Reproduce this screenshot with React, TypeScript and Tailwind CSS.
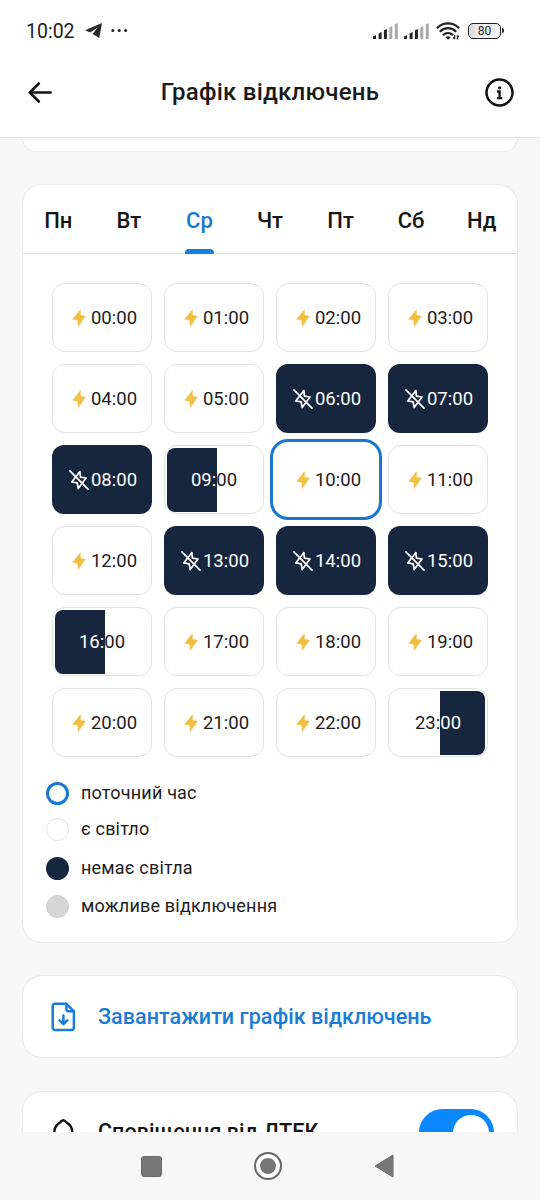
import React from 'react'

type SlotState = 'on' | 'off' | 'offFirst' | 'offSecond'

const days = ['Пн', 'Вт', 'Ср', 'Чт', 'Пт', 'Сб', 'Нд']
const activeDay = 2
const currentHour = 10

const outages: Record<number, SlotState> = {
  6: 'off',
  7: 'off',
  8: 'off',
  9: 'offFirst',
  13: 'off',
  14: 'off',
  15: 'off',
  16: 'offFirst',
  23: 'offSecond',
}

function BoltIcon() {
  return (
    <svg width="20" height="20" viewBox="0 0 20 20" className="shrink-0">
      <path
        d="M11.4 1.8 3.7 11.3 8.7 12.3 9.4 18.3 16.4 8.2 11.4 7.2Z"
        fill="#efc044"
        stroke="#efc044"
        strokeWidth="0.5"
        strokeLinejoin="round"
      />
    </svg>
  )
}

function BoltOffIcon() {
  return (
    <svg
      width="20"
      height="20"
      viewBox="0 0 20 20"
      fill="none"
      stroke="#fff"
      strokeWidth="1.7"
      strokeLinecap="round"
      strokeLinejoin="round"
      className="shrink-0"
    >
      <path d="M10.9 1.6 2.8 12 8.2 12.8 9.2 18.6 17 8 11.4 7.2Z" />
      <path d="M0.9 0.9 19 19.2" />
    </svg>
  )
}

function SignalIcon() {
  return (
    <svg width="26" height="16" viewBox="0 0 26 16">
      <path d="M0 16v-2.6l3-1.4v4zM5.6 16v-5.5l3-1.4V16zM10.9 16V7.4l3-1.4v10z" fill="#222" />
      <path d="M16.3 16V4.4l3-1.4v13zM21.8 16V1.4l3-1.4v16z" fill="#aaa" />
    </svg>
  )
}

function StatusBar() {
  return (
    <div className="flex h-[61px] items-center pl-[26px] pr-9 text-[#1c1c1c]">
      <span className="pt-0.5 text-[19.5px] leading-none">10:02</span>
      <svg width="17" height="15" viewBox="0 0 17 15" className="ml-2.5">
        <path d="M0 7.2 17 0 14.3 15 7.6 10.9 12.6 4.4 5.2 9.5Z" fill="#2a2a2a" />
        <path d="M5.2 9.5 6.1 14 8.3 11.4Z" fill="#fff" />
      </svg>
      <svg width="17" height="3" viewBox="0 0 17 3" className="ml-[9px]">
        <circle cx="1.8" cy="1.5" r="1.5" fill="#222" />
        <circle cx="8.2" cy="1.5" r="1.5" fill="#222" />
        <circle cx="14.6" cy="1.5" r="1.5" fill="#222" />
      </svg>
      <div className="ml-auto flex items-center">
        <SignalIcon />
        <div className="ml-[5.5px]">
          <SignalIcon />
        </div>
        <svg width="25" height="18" viewBox="0 0 25 18" fill="none" className="ml-1.5">
          <g stroke="#222" strokeWidth="2.2">
            <path d="M0.8 6.2C7.4-0.2 16.6-0.2 23.2 6.2" />
            <path d="M3.8 9.7C8.6 5 15.4 5 20.2 9.7" />
            <path d="M7 13.1C10 10.3 14 10.3 17 13.1" />
          </g>
          <path d="M9.3 15.2C11 13.8 13 13.8 14.7 15.2L12 17.8Z" fill="#222" />
          <path d="M18.6 13v4M18.6 17l-1.6-1.6M21.4 17.4v-4M21.4 13.4l1.6 1.6" stroke="#222" strokeWidth="1.3" />
        </svg>
        <div className="ml-[7px] flex h-4 w-[33px] items-center justify-center rounded-[5px] border-[1.5px] border-[#222] bg-gradient-to-r from-[#ddd] from-10% to-[#f2f2f2] to-30% pt-px text-[12px] leading-none">
          80
        </div>
        <div className="ml-px h-[5px] w-0.5 rounded-r-sm bg-[#222]" />
      </div>
    </div>
  )
}

function Header() {
  return (
    <header className="h-[138px] shrink-0 border-b border-[#e2e2e2] bg-white">
      <StatusBar />
      <div className="flex h-[62px] items-center justify-between pl-7 pr-[26px]">
        <svg
          width="25"
          height="22"
          viewBox="0 0 25 22"
          fill="none"
          stroke="#161616"
          strokeWidth="2.6"
          strokeLinecap="round"
          strokeLinejoin="round"
        >
          <path d="M22.6 11.5H2.4M10.8 2.5 1.8 11.5 10.8 20.5" />
        </svg>
        <h1 className="pl-0.5 text-[24px] font-medium leading-none tracking-[0.25px] text-[#1a1a1a]">
          Графік відключень
        </h1>
        <svg width="29" height="29" viewBox="0 0 29 29" fill="none" stroke="#111" strokeWidth="2.5">
          <circle cx="14.5" cy="14.5" r="13" />
          <circle cx="14.7" cy="9.8" r="1.6" fill="#111" stroke="none" />
          <path d="M12 13.5h2.6v6.3M11.9 20.1h5.4" strokeWidth="2.3" />
        </svg>
      </div>
    </header>
  )
}

function Slot({ hour }: { hour: number }) {
  const state = outages[hour] ?? 'on'
  const hh = String(hour).padStart(2, '0')

  if (state === 'offFirst' || state === 'offSecond') {
    const first = state === 'offFirst'
    return (
      <div className="relative flex h-[69px] items-center justify-center rounded-[13px] border-[1.5px] border-[#e1e2e3]">
        <div
          className={
            first
              ? 'absolute bottom-px left-0.5 top-0.5 w-[49.5px] rounded-l-[8px] bg-[#17263f]'
              : 'absolute bottom-px right-0.5 top-0.5 w-[45px] rounded-r-[8px] bg-[#17263f]'
          }
        />
        <span className={first ? 'relative pt-px text-white' : 'relative pt-px'}>{hh}:</span>
        <span className={first ? 'relative pt-px' : 'relative pt-px text-white'}>00</span>
      </div>
    )
  }

  if (state === 'off') {
    return (
      <div className="flex h-[69px] items-center justify-center gap-0.5 rounded-[12px] bg-[#17263f] pl-0.5 text-white">
        <BoltOffIcon />
        <span className="pt-px">{hh}:00</span>
      </div>
    )
  }

  return (
    <div
      className={
        hour === currentHour
          ? '-m-1.5 flex h-[81px] items-center justify-center gap-0.5 rounded-[18px] border-[3px] border-[#1877cf] pl-0.5'
          : 'flex h-[69px] items-center justify-center gap-0.5 rounded-[13px] border-[1.5px] border-[#e1e2e3] pl-0.5'
      }
    >
      <BoltIcon />
      <span className="pt-px">{hh}:00</span>
    </div>
  )
}

function Legend() {
  return (
    <ul className="mt-6 pl-[23px] text-[18px] leading-6 tracking-[0.19px] text-[#1c1c1c]">
      <li className="flex items-center gap-3">
        <span className="size-[23px] rounded-full border-[3px] border-[#1877cf]" />
        поточний час
      </li>
      <li className="mt-3 flex items-center gap-3">
        <span className="size-[23px] rounded-full border-[1.5px] border-[#e2e2e2]" />
        є світло
      </li>
      <li className="mt-[15px] flex items-center gap-3">
        <span className="size-[23px] rounded-full bg-[#17263f]" />
        немає світла
      </li>
      <li className="mt-3.5 flex items-center gap-3">
        <span className="size-[23px] rounded-full border border-[#cfcfd0] bg-[#d6d6d7]" />
        можливе відключення
      </li>
    </ul>
  )
}

function ScheduleCard() {
  return (
    <section className="mt-8 h-[759px] shrink-0 rounded-[20px] border border-[#e9e9e9] bg-white">
      <div className="grid h-[69px] grid-cols-7 border-b border-[#e2e2e2] text-[22px] font-medium text-[#151515]">
        {days.map((day, i) => (
          <div
            key={day}
            className={
              i === activeDay
                ? 'flex flex-col items-center justify-between text-[#1877cf]'
                : 'flex flex-col items-center justify-between'
            }
          >
            <span className="pt-5 leading-8">{day}</span>
            {i === activeDay && <span className="-mb-px h-[5px] w-[29px] rounded-t-[4px] bg-[#1480e2]" />}
          </div>
        ))}
      </div>

      {/* Hours */}
      <div className="mt-[29px] grid grid-cols-4 gap-3 px-[29px] text-[18.5px] leading-none text-[#1c1c1c]">
        {Array.from({ length: 24 }, (_, hour) => (
          <Slot key={hour} hour={hour} />
        ))}
      </div>

      <Legend />
    </section>
  )
}

function DownloadCard() {
  return (
    <section className="mt-8 flex h-[83px] shrink-0 items-center rounded-[20px] border border-[#e9e9e9] bg-white pl-7">
      <svg
        width="25"
        height="30"
        viewBox="0 0 25 30"
        fill="none"
        stroke="#1a7cd8"
        strokeWidth="2.5"
        strokeLinecap="round"
        strokeLinejoin="round"
      >
        <path d="M15.2 1.8H4.1a2.4 2.4 0 0 0-2.4 2.4v21.4a2.4 2.4 0 0 0 2.4 2.4h16.4a2.4 2.4 0 0 0 2.4-2.4V9.2Z" />
        <path d="M15.4 2v5a2 2 0 0 0 2 2.2h5.4" />
        <path d="M12.4 13.4v8.6M8.6 18.4l3.8 3.8 3.8-3.8" />
      </svg>
      <span className="ml-[22px] pt-px text-[21.6px] font-medium text-[#1a7cd8]">
        Завантажити графік відключень
      </span>
    </section>
  )
}

function NotificationsCard() {
  return (
    <section className="mt-[33px] flex h-[83px] shrink-0 items-center rounded-[20px] border border-[#e9e9e9] bg-white pl-7 pr-[23px]">
      <svg
        width="25"
        height="30"
        viewBox="0 0 25 30"
        fill="none"
        stroke="#111"
        strokeWidth="2.4"
        strokeLinecap="round"
        strokeLinejoin="round"
      >
        <path d="M12.2 2.2C10.6 2.2 10.2 3.6 9 4.4 5.8 6.4 3.4 9.4 3.4 13.6v6L1.4 24h22l-2.2-4.4v-6c0-4.2-2.4-7.2-5.6-9.2-1.2-.8-1.8-2.2-3.4-2.2Z" />
      </svg>
      <span className="ml-[22px] text-[21.6px] font-medium text-[#151515]">Сповіщення від ДТЕК</span>
      <div className="ml-auto flex h-[47px] w-[75px] items-center justify-end rounded-full bg-[#0a87fa] pr-[5px]">
        <div className="size-[36px] rounded-full bg-white" />
      </div>
    </section>
  )
}

function NavBar() {
  return (
    <nav className="flex h-[68px] shrink-0 items-center bg-[#f7f7f7]">
      <div className="ml-[141px] size-[21px] rounded-[3px] border border-[#6c6c6c] bg-[#777]" />
      <div className="ml-[92px] flex size-7 items-center justify-center rounded-full border-2 border-[#666] bg-white">
        <div className="size-4 rounded-full bg-[#777]" />
      </div>
      <svg width="20" height="24" viewBox="0 0 20 24" className="ml-[92px]">
        <path d="M1 12 19 1v22Z" fill="#777" stroke="#6c6c6c" strokeLinejoin="round" />
      </svg>
    </nav>
  )
}

export default function App() {
  return (
    <div className="flex h-[1200px] w-[540px] flex-col overflow-hidden bg-[#f7f7f7] font-['Roboto',sans-serif]">
      <Header />
      <main className="flex min-h-0 flex-1 flex-col overflow-hidden px-[22px]">
        {/* Bottom edge of the card scrolled under the header */}
        <div className="h-[14px] shrink-0 rounded-b-[18px] border border-t-0 border-[#e9e9e9] bg-white" />
        <ScheduleCard />
        <DownloadCard />
        <NotificationsCard />
      </main>
      <NavBar />
    </div>
  )
}
